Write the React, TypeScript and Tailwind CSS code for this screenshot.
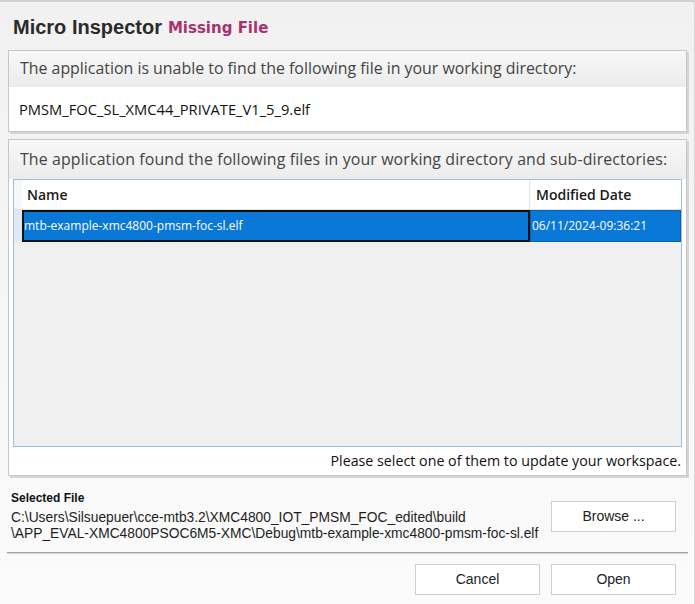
import React from "react";

const seg = { fontFamily: '"Open Sans", "Noto Sans", sans-serif' };
const arial = { fontFamily: '"Liberation Sans", Arial, sans-serif' };

function Btn({ children }: { children: React.ReactNode }) {
  return (
    <div
      className="w-[125px] h-[31px] bg-white border border-[#cfcfcf] flex items-center justify-center text-[14px] text-[#222]"
      style={arial}
    >
      {children}
    </div>
  );
}

export default function App() {
  return (
    <div className="w-[695px] h-[604px] bg-gradient-to-b from-[#f1f1f1] to-[#fbfbfb] border-t-2 border-[#d2cfcf] border-r border-r-[#d8d8d8] flex flex-col overflow-hidden">
      {/* Title */}
      <div className="h-[48px] flex items-end pb-[13px] pl-[13px] gap-[6px]">
        <span className="text-[20px] font-bold text-[#2a2a2a] leading-none" style={arial}>
          Micro Inspector
        </span>
        <span
          className="text-[15px] font-bold text-[#a8326f] leading-none mb-[1px]"
          style={{ fontFamily: '"DejaVu Sans", Verdana, sans-serif' }}
        >
          Missing File
        </span>
      </div>

      {/* Panel 1 */}
      <div className="ml-[8px] mr-[7px] h-[82px] border border-[#c6c6c6] shadow-[2px_2px_0_#d6d6d6] bg-white flex flex-col">
        <div className="h-[36px] bg-gradient-to-b from-[#f8f8f8] to-[#ececec] flex items-center pl-[11px] text-[15.9px] text-[#444]" style={seg}>
          The application is unable to find the following file in your working directory:
        </div>
        <div className="flex-1 flex items-center pl-[10px] text-[14.7px] text-[#111]" style={seg}>
          PMSM_FOC_SL_XMC44_PRIVATE_V1_5_9.elf
        </div>
      </div>

      {/* Panel 2 */}
      <div className="ml-[8px] mr-[7px] mt-[7px] h-[337px] border border-[#c6c6c6] shadow-[2px_2px_0_#d6d6d6] bg-white flex flex-col">
        <div className="h-[39px] bg-gradient-to-b from-[#f8f8f8] to-[#ececec] flex items-center pl-[11px] text-[15.9px] tracking-[0.12px] text-[#444]" style={seg}>
          The application found the following files in your working directory and sub-directories:
        </div>
        <div className="mx-[4px] h-[268px] border border-[#a5bcd8] bg-[#f0f0f0] flex flex-col">
          <div className="h-[30px] bg-white flex border-b border-[#e2e2e2]">
            <div className="w-[8px] bg-[#f4f8fc]" />
            <div className="flex-1 flex items-center pl-[5px] text-[14px] font-semibold text-[#1a1a1a] border-r border-[#e4e4e4]" style={seg}>
              Name
            </div>
            <div className="w-[151px] flex items-center pl-[6px] text-[14px] font-semibold text-[#1a1a1a]" style={seg}>
              Modified Date
            </div>
          </div>
          <div className="h-[32px] flex bg-white">
            <div className="w-[8px] bg-[#dfeaf7]" />
            <div className="flex-1 bg-[#0a78d6] border-2 border-[#111] flex items-center text-[12px] text-white" style={seg}>
              mtb-example-xmc4800-pmsm-foc-sl.elf
            </div>
            <div className="w-[151px] bg-[#0a78d6] border border-[#0a5fb0] flex items-center pl-[1px] text-[12px] text-white" style={seg}>
              06/11/2024-09:36:21
            </div>
          </div>
        </div>
        <div className="flex-1 flex items-center justify-end pr-[5px] text-[14.25px] text-[#111]" style={seg}>
          Please select one of them to update your workspace.
        </div>
      </div>

      {/* Selected file */}
      <div className="h-[76px] flex pr-[18px]">
        <div className="flex-1 pl-[11px] pt-[15px]" style={arial}>
          <div className="text-[12px] leading-[14px] font-bold text-[#111]">Selected File</div>
          <div className="mt-[5px] text-[13.8px] leading-[16px] text-[#1e1e1e]">
            <div>C:\Users\Silsuepuer\cce-mtb3.2\XMC4800_IOT_PMSM_FOC_edited\build</div>
            <div>\APP_EVAL-XMC4800PSOC6M5-XMC\Debug\mtb-example-xmc4800-pmsm-foc-sl.elf</div>
          </div>
        </div>
        <div className="mt-[25px]">
          <Btn>Browse ...</Btn>
        </div>
      </div>

      {/* Divider */}
      <div className="ml-[7px] mr-[6px] h-[2px] bg-[#a3a3a3] border-b border-[#d8d8d8]" />

      {/* Buttons */}
      <div className="mt-[10px] flex justify-end gap-[11px] pr-[18px]">
        <Btn>Cancel</Btn>
        <Btn>Open</Btn>
      </div>
    </div>
  );
}
